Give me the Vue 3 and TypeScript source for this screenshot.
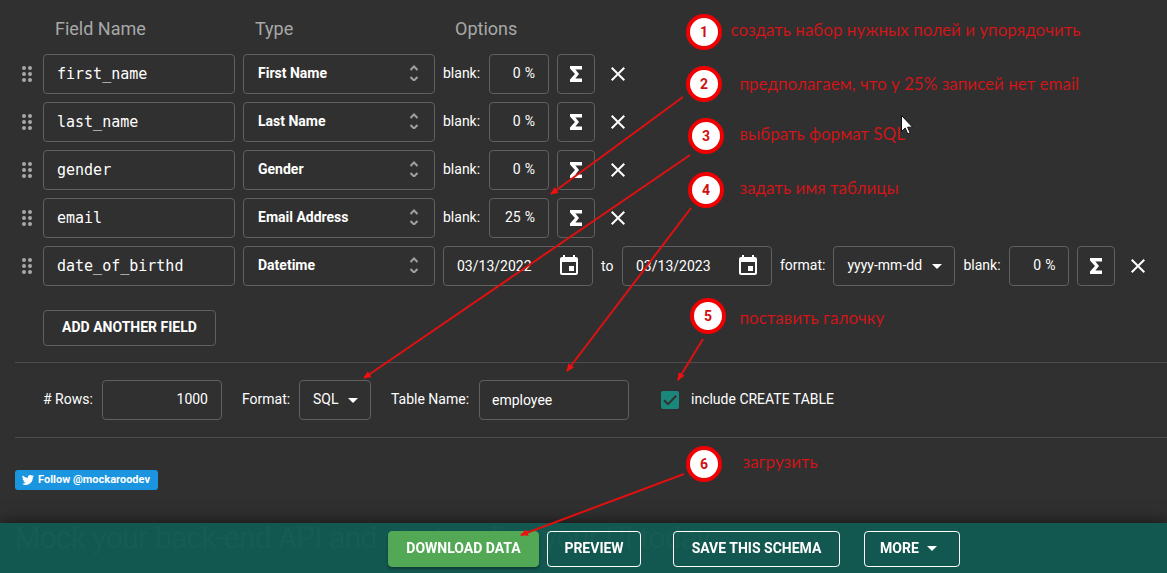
<script setup lang="ts">
import { ref } from 'vue'

interface Field {
  id: number
  name: string
  type: string
  blank: number
  dates?: { from: string; to: string; format: string }
}

interface Step {
  n: number
  x: number
  y: number
  text: string
  tx: number
  ty: number
}

const fields = ref<Field[]>([
  { id: 1, name: 'first_name', type: 'First Name', blank: 0 },
  { id: 2, name: 'last_name', type: 'Last Name', blank: 0 },
  { id: 3, name: 'gender', type: 'Gender', blank: 0 },
  { id: 4, name: 'email', type: 'Email Address', blank: 25 },
  {
    id: 5,
    name: 'date_of_birthd',
    type: 'Datetime',
    blank: 0,
    dates: { from: '03/13/2022', to: '03/13/2023', format: 'yyyy-mm-dd' },
  },
])

const rows = ref('1000')
const format = ref('SQL')
const tableName = ref('employee')
const includeCreate = ref(true)

function removeField(id: number) {
  fields.value = fields.value.filter((f) => f.id !== id)
}

const steps: Step[] = [
  { n: 1, x: 704, y: 32, text: 'создать набор нужных полей и упорядочить', tx: 731, ty: 30 },
  { n: 2, x: 704, y: 84, text: 'предполагаем, что у 25% записей нет email', tx: 740, ty: 84 },
  { n: 3, x: 706, y: 136, text: 'выбрать формат SQL', tx: 740, ty: 134 },
  { n: 4, x: 706, y: 190, text: 'задать имя таблицы', tx: 740, ty: 188 },
  { n: 5, x: 708, y: 316, text: 'поставить галочку', tx: 740, ty: 318 },
  { n: 6, x: 704, y: 464, text: 'загрузить', tx: 743, ty: 462 },
]

const arrows = [
  [683, 97, 551, 194],
  [690, 155, 364, 378],
  [691, 208, 567, 371],
  [703, 339, 678, 380],
  [684, 474, 521, 535],
]
</script>

<template>
  <main class="page">
    <section class="schema">
      <header class="head">
        <span class="head-col">Field Name</span>
        <span class="head-col">Type</span>
        <span class="head-col">Options</span>
      </header>

      <div v-for="f in fields" :key="f.id" class="row">
        <svg class="grip" viewBox="0 0 12 18" aria-hidden="true">
          <circle cx="3" cy="3" r="2" /><circle cx="9" cy="3" r="2" />
          <circle cx="3" cy="9" r="2" /><circle cx="9" cy="9" r="2" />
          <circle cx="3" cy="15" r="2" /><circle cx="9" cy="15" r="2" />
        </svg>
        <input v-model="f.name" class="box name" type="text" aria-label="Field name" />
        <button class="box type" type="button">
          <span>{{ f.type }}</span>
          <svg class="updown" viewBox="0 0 10 16" aria-hidden="true">
            <path d="M1.500 5 5 1.500 8.500 5M1.500 12 5 15.500 8.500 12" />
          </svg>
        </button>

        <template v-if="f.dates">
          <div class="box date">
            <input v-model="f.dates.from" type="text" aria-label="From date" />
            <button type="button" class="icon-btn" aria-label="Pick from date">
              <svg class="calendar" viewBox="0 0 24 24"><path d="M17 12h-5v5h5v-5zM16 1v2H8V1H6v2H5c-1.110 0-1.990.900-1.990 2L3 19c0 1.100.890 2 2 2h14c1.100 0 2-.900 2-2V5c0-1.100-.900-2-2-2h-1V1h-2zm3 18H5V8h14v11z" /></svg>
            </button>
          </div>
          <span class="to">to</span>
          <div class="box date">
            <input v-model="f.dates.to" type="text" aria-label="To date" />
            <button type="button" class="icon-btn" aria-label="Pick to date">
              <svg class="calendar" viewBox="0 0 24 24"><path d="M17 12h-5v5h5v-5zM16 1v2H8V1H6v2H5c-1.110 0-1.990.900-1.990 2L3 19c0 1.100.890 2 2 2h14c1.100 0 2-.900 2-2V5c0-1.100-.900-2-2-2h-1V1h-2zm3 18H5V8h14v11z" /></svg>
            </button>
          </div>
          <label for="date-format">format:</label>
          <div class="select-wrap date-format">
            <select id="date-format" v-model="f.dates.format" class="box">
              <option>yyyy-mm-dd</option>
              <option>mm/dd/yyyy</option>
            </select>
            <svg class="caret" viewBox="0 0 10 5" aria-hidden="true"><path d="M0 0h10L5 5z" /></svg>
          </div>
        </template>

        <label class="blank-label" :for="'blank-' + f.id">blank:</label>
        <div class="box percent">
          <input :id="'blank-' + f.id" v-model="f.blank" type="text" />
          <span>%</span>
        </div>
        <button class="box sigma" type="button" aria-label="Formula">
          <svg viewBox="0 0 12 16" aria-hidden="true"><path d="M0 0h12v3.400H5.400L9 8l-3.600 4.600H12V16H0v-2.400L5 8 0 2.400z" /></svg>
        </button>
        <button class="remove" type="button" aria-label="Remove field" @click="removeField(f.id)">
          <svg viewBox="0 0 14 14" aria-hidden="true"><path d="M.7.7l12.600 12.600M13.300.7L.7 13.300" /></svg>
        </button>
      </div>

      <button class="box add" type="button">ADD ANOTHER FIELD</button>
    </section>

    <hr />

    <section class="output">
      <label class="rows-label" for="rows"># Rows:</label>
      <input id="rows" v-model="rows" class="box rows" type="text" />
      <label class="format-label" for="format">Format:</label>
      <div class="select-wrap format">
        <select id="format" v-model="format" class="box">
          <option>SQL</option>
          <option>CSV</option>
          <option>JSON</option>
        </select>
        <svg class="caret" viewBox="0 0 10 5" aria-hidden="true"><path d="M0 0h10L5 5z" /></svg>
      </div>
      <label class="table-label" for="table-name">Table Name:</label>
      <input id="table-name" v-model="tableName" class="box table-name" type="text" />
      <span class="check">
        <input id="create" v-model="includeCreate" type="checkbox" />
        <svg viewBox="0 0 18 18" aria-hidden="true"><path d="M3 9.200l4 4 8.200-8.400" /></svg>
      </span>
      <label for="create">include CREATE TABLE</label>
    </section>

    <hr />

    <a class="follow" href="#follow">
      <svg viewBox="0 0 24 20" aria-hidden="true"><path d="M24 2.400a10 10 0 0 1-2.800.8A5 5 0 0 0 23.300.5a10 10 0 0 1-3.100 1.200A4.900 4.900 0 0 0 11.800 6.200 14 14 0 0 1 1.700 1a4.900 4.900 0 0 0 1.500 6.600A5 5 0 0 1 1 7v.1a4.900 4.900 0 0 0 3.900 4.800 5 5 0 0 1-2.200.1 4.900 4.900 0 0 0 4.600 3.400A10 10 0 0 1 0 17.500 14 14 0 0 0 21.500 5.100 10 10 0 0 0 24 2.400z" /></svg>
      <span>Follow @mockaroodev</span>
    </a>

    <h1>Mock your back-end API and start coding your UI today.</h1>

    <footer class="actions">
      <button class="action primary" type="button">DOWNLOAD DATA</button>
      <button class="action preview" type="button">PREVIEW</button>
      <button class="action save" type="button">SAVE THIS SCHEMA</button>
      <button class="action more" type="button">
        MORE
        <svg class="caret-inline" viewBox="0 0 10 5" aria-hidden="true"><path d="M0 0h10L5 5z" /></svg>
      </button>
    </footer>

    <div class="notes">
      <svg class="arrows" aria-hidden="true">
        <defs>
          <marker id="tip" viewBox="0 0 8 8" refX="7" refY="4" markerWidth="8" markerHeight="8" markerUnits="userSpaceOnUse" orient="auto">
            <path d="M0 0.500 8 4 0 7.500z" />
          </marker>
        </defs>
        <line v-for="(a, i) in arrows" :key="i" :x1="a[0]" :y1="a[1]" :x2="a[2]" :y2="a[3]" marker-end="url(#tip)" />
      </svg>
      <template v-for="s in steps" :key="s.n">
        <span class="badge" :style="{ left: s.x + 'px', top: s.y + 'px' }">{{ s.n }}</span>
        <span class="note" :style="{ left: s.tx + 'px', top: s.ty + 'px' }">{{ s.text }}</span>
      </template>
      <svg class="pointer" viewBox="0 0 12 20" aria-hidden="true">
        <path d="M.5.500v16l3.700-3.500 2.600 6 2.400-1-2.600-5.800h5z" />
      </svg>
    </div>
  </main>
</template>

<style>
body {
  background: #303030;
}
</style>

<style scoped>
.page {
  position: relative;
  color: #fff;
  font: 14px/20px Roboto, sans-serif;
}

input,
select,
button {
  box-sizing: border-box;
  margin: 0;
  padding: 0;
  border: 0;
  background: transparent;
  color: inherit;
  font: inherit;
  outline: none;
  appearance: none;
}

svg {
  display: block;
  flex: none;
}

.schema {
  display: flex;
  flex-direction: column;
  gap: 8px;
  padding: 18px 0 16px 21px;
}

.head {
  display: flex;
  gap: 8px;
  height: 20px;
  margin-bottom: 8px;
  padding-left: 34px;
  color: #a8a8a8;
  font-size: 18px;
  line-height: 22px;
}

.head-col {
  width: 192px;
}

.row {
  display: flex;
  align-items: center;
  gap: 8px;
}

.row label,
.output label {
  padding-bottom: 2px;
}

.grip {
  width: 12px;
  height: 18px;
  margin-right: 2px;
  fill: #a8a8a8;
}

.box {
  box-sizing: border-box;
  height: 40px;
  border: 1px solid #606060;
  border-radius: 4px;
}

.name {
  width: 192px;
  padding: 0 13px;
  font-family: "DejaVu Sans Mono", monospace;
  font-size: 15px;
}

.type {
  display: flex;
  align-items: center;
  justify-content: space-between;
  width: 192px;
  padding: 0 15px 2px 14px;
  font-weight: 700;
}

.updown {
  width: 10px;
  height: 16px;
  fill: none;
  stroke: #a0a0a0;
  stroke-width: 2;
}

.date {
  display: flex;
  align-items: center;
  justify-content: space-between;
  width: 150px;
  padding: 0 11px 0 13px;
}

.date input {
  width: 90px;
}

.calendar {
  width: 24px;
  height: 24px;
  fill: #fff;
}

.to {
  width: 13px;
}

.select-wrap {
  position: relative;
}

.select-wrap select {
  width: 100%;
  padding: 0 13px 2px;
}

.date-format {
  width: 122px;
}

.format {
  width: 72px;
}

.caret {
  position: absolute;
  top: 18px;
  right: 13px;
  width: 10px;
  height: 5px;
  fill: #fff;
  pointer-events: none;
}

.blank-label {
  min-width: 38px;
}

.percent {
  display: flex;
  align-items: center;
  gap: 4px;
  width: 60px;
  padding: 0 13px 2px 10px;
}

.percent input {
  flex: 1;
  min-width: 0;
  text-align: right;
}

.sigma {
  display: grid;
  place-items: center;
  width: 38px;
}

.sigma svg {
  width: 12px;
  height: 16px;
  fill: #fff;
}

.remove {
  display: grid;
  place-items: center;
  width: 30px;
  height: 30px;
}

.remove svg {
  width: 14px;
  height: 14px;
  fill: none;
  stroke: #fff;
  stroke-width: 2;
}

.add {
  align-self: flex-start;
  min-width: 173px;
  height: 36px;
  margin: 16px 0 0 22px;
  padding: 0 15px 2px;
  font-weight: 700;
}

hr {
  height: 1px;
  margin: 0 0 0 15px;
  border: 0;
  background: #4c4c4c;
}

.output {
  display: flex;
  align-items: center;
  gap: 8px;
  padding: 17px 0 17px 43px;
}

.rows-label {
  min-width: 51px;
}

.format-label {
  min-width: 49px;
}

.table-label {
  min-width: 80px;
}

.rows {
  width: 120px;
  margin-right: 12px;
  padding: 0 13px 2px;
  text-align: right;
}

.format {
  margin-right: 12px;
}

.table-name {
  width: 150px;
  padding: 0 12px;
}

.check {
  display: grid;
  margin: 0 4px 0 24px;
}

.check input,
.check svg {
  grid-area: 1 / 1;
  width: 18px;
  height: 18px;
}

.check input {
  border-radius: 2px;
  background: #5a5a5a;
}

.check input:checked {
  background: #1b877b;
}

.check svg {
  fill: none;
  stroke: #303030;
  stroke-width: 2;
  pointer-events: none;
}

.follow {
  display: inline-flex;
  align-items: center;
  gap: 4px;
  min-width: 143px;
  height: 20px;
  box-sizing: border-box;
  margin: 32px 0 0 15px;
  padding: 0 7px;
  border-radius: 3px;
  background: #1b95e0;
  color: #fff;
  font: 700 11px/20px Roboto, sans-serif;
  text-decoration: none;
  vertical-align: top;
}

.follow svg {
  width: 12px;
  height: 10px;
  fill: #fff;
}

h1 {
  margin: 28px 0 0 15px;
  color: #a8a8a8;
  font-size: 29px;
  font-weight: 300;
  line-height: 40px;
}

.actions {
  position: fixed;
  right: 0;
  bottom: 0;
  left: 0;
  display: flex;
  align-items: center;
  gap: 8px;
  height: 50px;
  padding: 2px 0 0 388px;
  box-sizing: border-box;
  background: rgba(19, 90, 82, 0.97);
  box-shadow: 0 -2px 14px rgba(0, 0, 0, 0.5);
}

.action {
  display: flex;
  align-items: center;
  justify-content: center;
  gap: 8px;
  height: 36px;
  padding: 0 15px 2px;
  border: 1px solid #fff;
  border-radius: 4px;
  font-weight: 700;
}

.primary {
  min-width: 151px;
  border-color: #52a855;
  background: #52a855;
  box-shadow: 0 2px 3px rgba(0, 0, 0, 0.35);
}

.preview {
  min-width: 94px;
}

.save {
  min-width: 167px;
  margin: 0 16px 0 24px;
}

.more {
  min-width: 96px;
  padding-right: 22px;
}

.caret-inline {
  width: 10px;
  height: 5px;
  fill: #fff;
}

.notes {
  position: fixed;
  inset: 0;
  overflow: hidden;
  pointer-events: none;
}

.arrows {
  width: 100%;
  height: 100%;
  stroke: #e01010;
  stroke-width: 2;
}

.arrows path {
  fill: #f01010;
  stroke: none;
}

.badge {
  position: absolute;
  display: grid;
  place-items: center;
  width: 28px;
  height: 28px;
  border: 4px solid #f00000;
  border-radius: 50%;
  background: #fff;
  color: #d01010;
  font: 700 14px/20px Roboto, sans-serif;
  transform: translate(-50%, -50%);
}

.note {
  position: absolute;
  color: #d8161a;
  font: 17px/24px Lato, sans-serif;
  white-space: nowrap;
  transform: translateY(-50%);
}

.pointer {
  position: absolute;
  top: 115px;
  left: 901px;
  width: 12px;
  height: 20px;
  fill: #fff;
  stroke: #111;
  stroke-width: 1;
}
</style>
